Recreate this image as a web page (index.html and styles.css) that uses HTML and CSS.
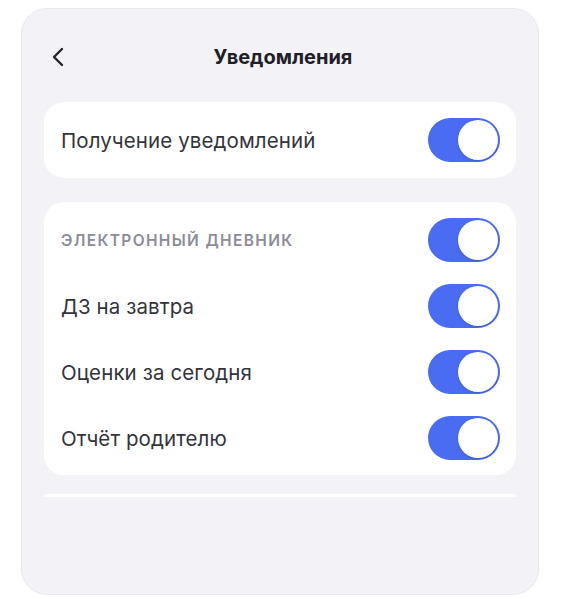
FILE: index.html
```html
<!DOCTYPE html>
<html>
<head>
  <meta charset="utf-8">
  <title>Уведомления</title>
  <link rel="stylesheet" href="styles.css">
</head>
<body>
  <div class="screen">
    <div class="header">
      <button class="back" type="button" aria-label="Назад">
        <svg width="14" height="20" viewBox="0 0 14 20">
          <path d="M11 2 L3 10 L11 18" fill="none" stroke="#22222c" stroke-width="2.4" stroke-linecap="round" stroke-linejoin="round"/>
        </svg>
      </button>
      <h1 class="title">Уведомления</h1>
      <span></span>
    </div>

    <div class="card single">
      <span class="label">Получение уведомлений</span>
      <label class="switch"><input type="checkbox" checked><span class="track"></span></label>
    </div>

    <div class="card group">
      <div class="row">
        <span class="section">Электронный дневник</span>
        <label class="switch"><input type="checkbox" checked><span class="track"></span></label>
      </div>
      <div class="row">
        <span class="label">ДЗ на завтра</span>
        <label class="switch"><input type="checkbox" checked><span class="track"></span></label>
      </div>
      <div class="row">
        <span class="label">Оценки за сегодня</span>
        <label class="switch"><input type="checkbox" checked><span class="track"></span></label>
      </div>
      <div class="row">
        <span class="label">Отчёт родителю</span>
        <label class="switch"><input type="checkbox" checked><span class="track"></span></label>
      </div>
    </div>

    <div class="card peek"></div>
  </div>
</body>
</html>
```

FILE: styles.css
```css
body {
  margin: 0;
  padding: 8px 22px 0 21px;
  background: #fff;
  font-family: Inter, "Noto Sans", sans-serif;
  color: #2b2b33;
}

.screen {
  box-sizing: border-box;
  height: 587px;
  padding: 0 22px;
  background: #f2f2f7;
  border: 1px solid #e8e9ef;
  border-radius: 26px;
  overflow: hidden;
}

.header {
  display: grid;
  grid-template-columns: 1fr auto 1fr;
  align-items: center;
  height: 74px;
  padding-top: 11px;
  margin-bottom: 8px;
}

.back {
  justify-self: start;
  margin-left: 7px;
  padding: 0;
  border: none;
  background: none;
  display: flex;
}

.title {
  margin: 0 0 0 6px;
  font-size: 20px;
  font-weight: 700;
  color: #1f1f28;
}

.card {
  background: #fff;
  border-radius: 20px;
}

.single {
  display: flex;
  align-items: center;
  justify-content: space-between;
  height: 76px;
  padding: 0 16px 0 17px;
  margin-bottom: 24px;
}

.group {
  padding: 5px 16px 4px 17px;
  margin-bottom: 19px;
}

.row {
  display: flex;
  align-items: center;
  justify-content: space-between;
  height: 66px;
}

.label {
  font-size: 20.5px;
  letter-spacing: 0.1px;
  color: #34343c;
}

.section {
  font-size: 15.5px;
  font-weight: 600;
  letter-spacing: 1.35px;
  text-transform: uppercase;
  color: #8c8c9b;
}

.peek {
  height: 3px;
  border-radius: 6px 6px 0 0;
}

.switch {
  position: relative;
  display: block;
  width: 72px;
  height: 44px;
}

.switch input {
  display: none;
}

.track {
  position: absolute;
  inset: 0;
  border-radius: 22px;
  background: #4a6cf2;
}

.track::after {
  content: "";
  position: absolute;
  top: 2px;
  right: 2px;
  width: 40px;
  height: 40px;
  border-radius: 50%;
  background: #fff;
  box-shadow: 0 1px 2px rgba(30, 40, 90, 0.25);
}
```
